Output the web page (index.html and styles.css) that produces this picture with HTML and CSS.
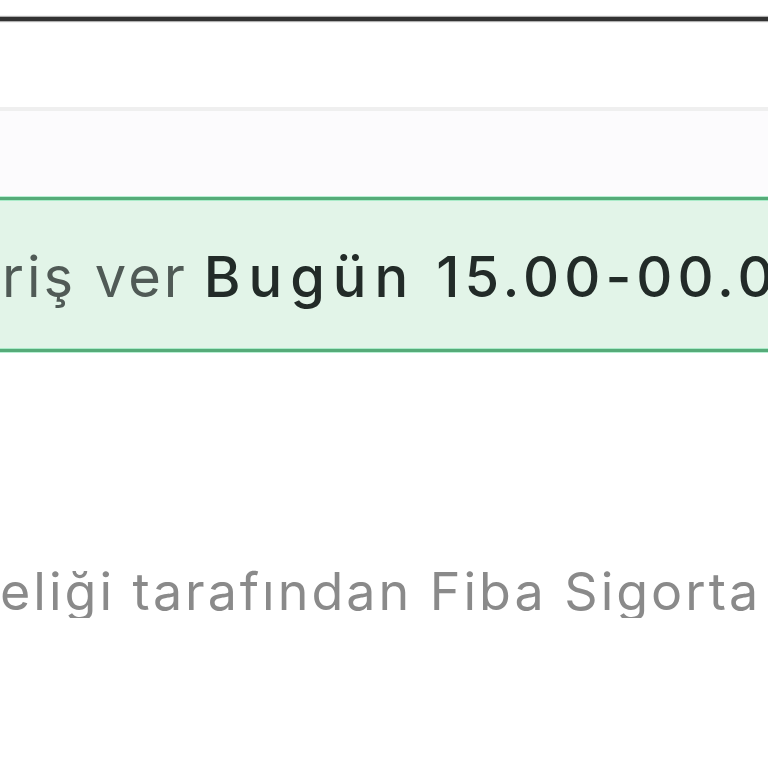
FILE: index.html
```html
<!DOCTYPE html>
<html lang="tr">
<head>
<meta charset="utf-8">
<link rel="stylesheet" href="styles.css">
</head>
<body>
<div class="page">
  <div class="top-rule"></div>
  <div class="header-space"></div>
  <div class="section">
    <div class="notice">
      <p class="notice-text"><span class="muted">riş ver</span> <strong><span class="day">Bugün</span> 15.00-00.00</strong></p>
    </div>
  </div>
  <div class="footer">
    <p class="footer-text">eliği tarafından Fiba Sigorta</p>
  </div>
</div>
</body>
</html>
```

FILE: styles.css
```css
html, body {
  margin: 0;
  padding: 0;
  background: #ffffff;
  overflow: hidden;
}
.page {
  width: 768px;
  height: 768px;
  overflow: hidden;
  font-family: "Inter", "Open Sans", sans-serif;
}
.top-rule {
  margin-top: 17px;
  height: 4px;
  background: #333333;
  box-shadow: 0 0 1px 1px #b0b0b0;
}
.header-space {
  height: 86px;
  border-bottom: 4px solid #efefef;
}
.section {
  background: #fcfbfd;
  padding-top: 86px;
}
.notice {
  height: 149px;
  border-top: 3px solid #56ab79;
  border-bottom: 3px solid #56ab79;
  box-shadow: 0 -1px 0 #b8f0d4, 0 1px 0 #b8f0d4, inset 0 1px 0 #a9ebc8, inset 0 -1px 0 #a9ebc8;
  background: #e2f4e8;
  display: flex;
  align-items: center;
  overflow: hidden;
}
.notice-text {
  margin: 0 0 0 2px;
  white-space: nowrap;
  font-size: 56px;
  line-height: 1;
  padding-top: 4px;
  color: #222b28;
}
.muted {
  color: #505a56;
  font-weight: 400;
  letter-spacing: 3px;
}
.notice-text strong {
  font-weight: 500;
  letter-spacing: 5px;
}
.notice-text .day {
  letter-spacing: 8px;
}
.footer {
  padding-top: 214px;
  overflow: hidden;
}
.footer-text {
  margin: 0;
  white-space: nowrap;
  font-size: 52px;
  line-height: 1;
  letter-spacing: 3px;
  color: #8a8a8a;
  font-weight: 400;
}
```
